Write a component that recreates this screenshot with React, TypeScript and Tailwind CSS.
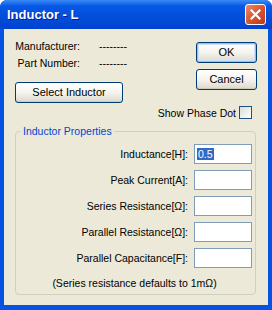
import React from 'react'

const FONT = { fontFamily: '"Liberation Sans", Arial, sans-serif' }

const ROWS = [
  { label: 'Inductance[H]:', value: '0.5' },
  { label: 'Peak Current[A]:', value: '' },
  { label: 'Series Resistance[Ω]:', value: '' },
  { label: 'Parallel Resistance[Ω]:', value: '' },
  { label: 'Parallel Capacitance[F]:', value: '' },
]

function XpButton({ label, wide, isDefault }: { label: string; wide?: boolean; isDefault?: boolean }) {
  return (
    <button
      className={`h-[21px] ${wide ? 'w-[108px]' : 'w-[61px]'} rounded-[3px] border border-[#003c74] bg-gradient-to-b from-[#ffffff] via-[#f5f4ef] to-[#dcd8cb] text-[11px] leading-none text-black ${
        isDefault ? 'shadow-[inset_0_0_0_1px_#9bbcf1,inset_0_0_0_2px_#cee0fb]' : 'shadow-[inset_0_-1px_0_#cfcbbd]'
      }`}
    >
      {label}
    </button>
  )
}

export default function App() {
  return (
    <div style={FONT} className="w-[272px] h-[310px] flex flex-col rounded-t-[7px] overflow-hidden bg-[#0553e2]">
      <div className="h-[29px] shrink-0 flex items-center pl-[7px] pr-[6px] bg-gradient-to-b from-[#3b8cf5] via-[#0758e6] via-20% to-[#0042cf]">
        <span className="text-white font-bold text-[13px] [text-shadow:1px_1px_0_#0a1d8a]">Inductor - L</span>
        <div className="ml-auto w-[21px] h-[21px] rounded-[3px] border border-white bg-gradient-to-br from-[#e98a6c] via-[#d9542f] to-[#c0391a] flex items-center justify-center">
          <svg width="11" height="11" viewBox="0 0 11 11">
            <path d="M1.5 1.5 L9.5 9.5 M9.5 1.5 L1.5 9.5" stroke="white" strokeWidth="2.2" strokeLinecap="square" />
          </svg>
        </div>
      </div>

      <div className="flex-1 mx-[4px] mb-[5px] bg-[#ece9d8] text-[10.5px] leading-[12px] text-black flex flex-col">
        <div className="flex">
          <div className="pl-[10px] pt-[11px] flex flex-col">
            <div className="grid grid-cols-[66px_auto] gap-x-[19px] gap-y-[5px]">
              <span className="text-right">Manufacturer:</span>
              <span>--------</span>
              <span className="text-right">Part Number:</span>
              <span>--------</span>
            </div>
            <div className="mt-[13px] ml-[1px]">
              <XpButton label="Select Inductor" wide />
            </div>
          </div>
          <div className="ml-auto pr-[11px] pt-[13px] flex flex-col items-end gap-[6px]">
            <XpButton label="OK" isDefault />
            <XpButton label="Cancel" />
            <div className="mt-[10px] mr-[5px] flex items-center gap-[3px]">
              <span>Show Phase Dot</span>
              <span className="w-[13px] h-[13px] border border-[#1c5180] bg-gradient-to-br from-[#dcdcd7] to-white" />
            </div>
          </div>
        </div>

        <fieldset className="mt-[6px] ml-[11px] w-[241px] h-[170px] border border-[#d0d0bf] rounded-[4px] p-0 m-0 min-w-0">
          <legend className="ml-[5px] px-[2px] text-[#0046d5]">Inductor Properties</legend>
          <div className="pt-[7px] flex flex-col gap-[6px] pr-[3px]">
            {ROWS.map(r => (
              <div key={r.label} className="flex items-center justify-end gap-[6px]">
                <span>{r.label}</span>
                <div className="w-[58px] h-[20px] border border-[#7f9db9] bg-white flex items-center pl-[2px]">
                  {r.value && <span className="bg-[#316ac5] text-white px-[1px]">{r.value}</span>}
                </div>
              </div>
            ))}
          </div>
          <p className="mt-[9px] text-center pr-[2px]">(Series resistance defaults to 1mΩ)</p>
        </fieldset>
      </div>
    </div>
  )
}
